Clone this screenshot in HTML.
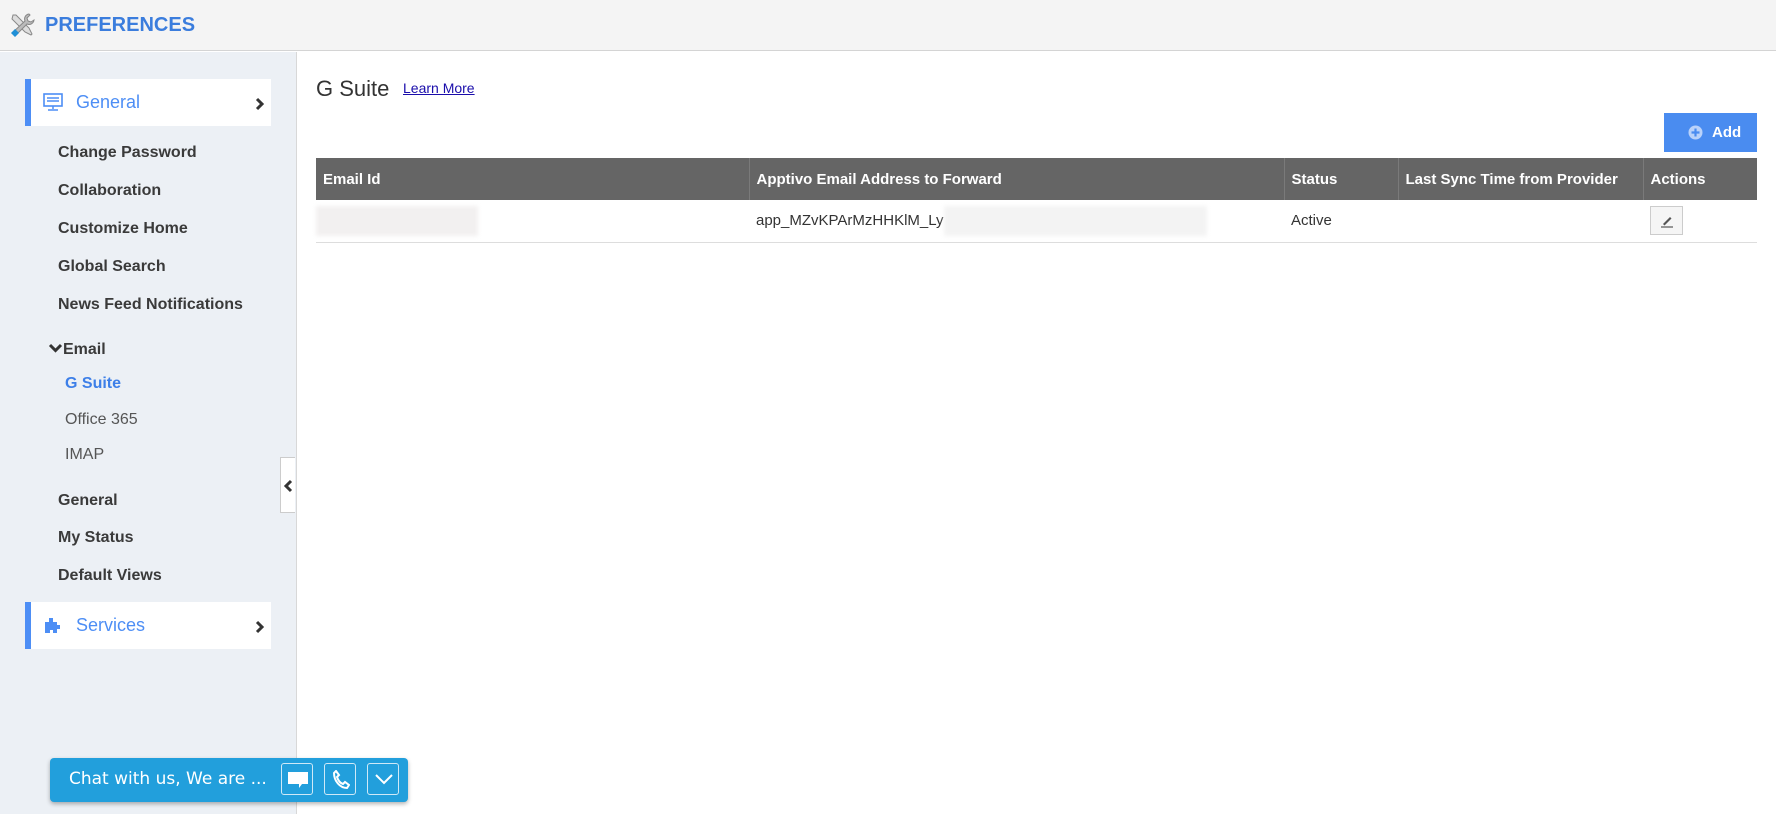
<!DOCTYPE html>
<html><head><meta charset="utf-8"><style>
*{margin:0;padding:0;box-sizing:border-box}
body{width:1776px;height:814px;overflow:hidden;font-family:"Liberation Sans",Arial,sans-serif;background:#fff;position:relative;color:#333}
.hdr{position:absolute;left:0;top:0;width:1776px;height:51px;background:#f4f4f4;border-bottom:1px solid #d4d4d4}
.hdr .t{position:absolute;left:45px;top:14px;font-size:20px;font-weight:bold;color:#3b7ddd}
.side{position:absolute;left:0;top:52px;width:297px;height:762px;background:#ecf0f5;border-right:1px solid #d8d8d8}
.box{position:absolute;left:25px;width:246px;height:47px;background:#fff;border-left:6px solid #4d8ef5}
.box .l{position:absolute;left:45px;top:13px;font-size:18px;color:#4d8ef5}
.box svg.c{position:absolute;right:6px;top:18px}
.mi{position:absolute;left:58px;font-size:16px;font-weight:bold;color:#3a3a3a}
.si{position:absolute;left:65px;font-size:16px;color:#555}
table{position:absolute;left:316px;top:158px;width:1441px;border-collapse:collapse;font-size:15px}
th{background:#656565;color:#fff;text-align:left;height:42px;padding:0 7px;border-left:1px solid #7a7a7a;font-weight:bold}
td{height:42px;padding:0 7px;border-bottom:1px solid #ddd;color:#333}
.chat{position:absolute;left:50px;top:758px;width:358px;height:44px;background:#229fdc;border-radius:4px;box-shadow:0 2px 4px rgba(0,0,0,.3)}
.chat .tx{position:absolute;left:19px;top:11px;color:#fff;font-family:"DejaVu Sans","Liberation Sans",sans-serif;font-size:17px}
.cb{position:absolute;top:5px;width:32px;height:32px;border:1px solid #cfe9f7;border-radius:3px}
</style></head><body>
<div class="hdr">
<svg style="position:absolute;left:9px;top:12px" width="26" height="26" viewBox="0 0 26 26"><path d="M4 3l3 0 13 13 3 6-1 1-6-3L3 7z" fill="#ddd" stroke="#888"/><path d="M20 2a5 5 0 0 0-4 7L3 21l3 3L18 12a5 5 0 0 0 7-4l-3 2-3-1-1-3 3-3z" fill="#bbb" stroke="#888"/><path d="M2 21l4-4 4 4-4 4z" fill="#1f8fd6"/></svg>
<div class="t">PREFERENCES</div></div>
<div class="side">
<div class="box" style="top:27px"><svg style="position:absolute;left:12px;top:13px" width="20" height="20" viewBox="0 0 20 20"><rect x="1" y="2" width="18" height="12" fill="none" stroke="#4d8ef5" stroke-width="1.6"/><path d="M4 6h12M4 9h12M10 14v3M5 18h10" stroke="#4d8ef5" stroke-width="1.5"/></svg><span class="l">General</span><svg class="c" width="10" height="14" viewBox="0 0 10 14"><path d="M2 2l5 5-5 5" fill="none" stroke="#333" stroke-width="3"/></svg></div>
<div class="mi" style="top:92px">Change Password</div>
<div class="mi" style="top:130px">Collaboration</div>
<div class="mi" style="top:168px">Customize Home</div>
<div class="mi" style="top:206px">Global Search</div>
<div class="mi" style="top:244px">News Feed Notifications</div>
<div class="mi" style="top:289px;left:48px"><svg width="15" height="12" viewBox="0 0 15 12" style="vertical-align:0"><path d="M2 3l5.5 5.5L13 3" fill="none" stroke="#333" stroke-width="3"/></svg>Email</div>
<div class="si" style="top:323px;color:#3d7fe8;font-weight:bold">G Suite</div>
<div class="si" style="top:359px">Office 365</div>
<div class="si" style="top:394px">IMAP</div>
<div class="mi" style="top:440px">General</div>
<div class="mi" style="top:477px">My Status</div>
<div class="mi" style="top:515px">Default Views</div>
<div class="box" style="top:550px"><svg style="position:absolute;left:12px;top:14px" width="20" height="18" viewBox="0 0 20 18"><path d="M2 6h4V2h4v4h4v3h3v4h-3v4h-4v-3H7v3H2z" fill="#4d8ef5"/></svg><span class="l">Services</span><svg class="c" width="10" height="14" viewBox="0 0 10 14"><path d="M2 2l5 5-5 5" fill="none" stroke="#333" stroke-width="3"/></svg></div>
<div style="position:absolute;left:280px;top:405px;width:15px;height:56px;background:#fff;border:1px solid #ccc;border-right:none"><svg style="position:absolute;left:2px;top:21px" width="10" height="14" viewBox="0 0 10 14"><path d="M8 2L3 7l5 5" fill="none" stroke="#333" stroke-width="3"/></svg></div>
</div>
<div style="position:absolute;left:316px;top:76px;font-size:22px;color:#333">G Suite</div>
<div style="position:absolute;left:403px;top:80px;font-size:14px;color:#1a0dab;text-decoration:underline">Learn More</div>
<div style="position:absolute;left:1664px;top:113px;width:93px;height:39px;background:#4a8cf0;color:#fff;font-weight:bold;font-size:15px"><svg style="position:absolute;left:24px;top:12px" width="15" height="15" viewBox="0 0 15 15"><circle cx="7.5" cy="7.5" r="7" fill="#b9d2fa"/><path d="M7.5 3.5v8M3.5 7.5h8" stroke="#4a8cf0" stroke-width="2.2"/></svg><span style="position:absolute;left:48px;top:11px">Add</span></div>
<table>
<tr><th style="width:433px;border-left:none">Email Id</th><th style="width:535px">Apptivo Email Address to Forward</th><th style="width:114px">Status</th><th style="width:245px">Last Sync Time from Provider</th><th>Actions</th></tr>
<tr><td style="padding-left:0"><div style="width:162px;height:30px;background:#f2f0f0;filter:blur(2px)"></div></td><td><span>app_MZvKPArMzHHKlM_Ly</span><span style="display:inline-block;vertical-align:middle;width:263px;height:30px;background:#f3f3f3;filter:blur(2px)"></span></td><td>Active</td><td></td><td><div style="width:33px;height:29px;border:1px solid #ccc;background:#f5f5f5;position:relative"><svg style="position:absolute;left:9px;top:7px" width="14" height="14" viewBox="0 0 14 14"><path d="M3 10L10 3l1.5 1.5L4.5 11.5z" fill="#555"/><path d="M1 13h12" stroke="#555" stroke-width="1.2"/></svg></div></td></tr>
</table>
<div class="chat"><span class="tx">Chat with us, We are ...</span>
<div class="cb" style="left:231px"><svg style="position:absolute;left:5px;top:7px" width="22" height="18" viewBox="0 0 22 18"><path d="M1 1h20v12H15l-3 4v-4H1z" fill="#fff"/></svg></div>
<div class="cb" style="left:274px"><svg style="position:absolute;left:7px;top:6px" width="18" height="20" viewBox="0 0 18 20"><path d="M4 1l3 4-2 2c1 3 3 6 6 7l2-2 4 3-2 3C8 18 2 11 2 3z" fill="none" stroke="#fff" stroke-width="2"/></svg></div>
<div class="cb" style="left:317px"><svg style="position:absolute;left:6px;top:9px" width="20" height="12" viewBox="0 0 20 12"><path d="M2 2l8 8 8-8" fill="none" stroke="#fff" stroke-width="2"/></svg></div>
</div>
</body></html>
